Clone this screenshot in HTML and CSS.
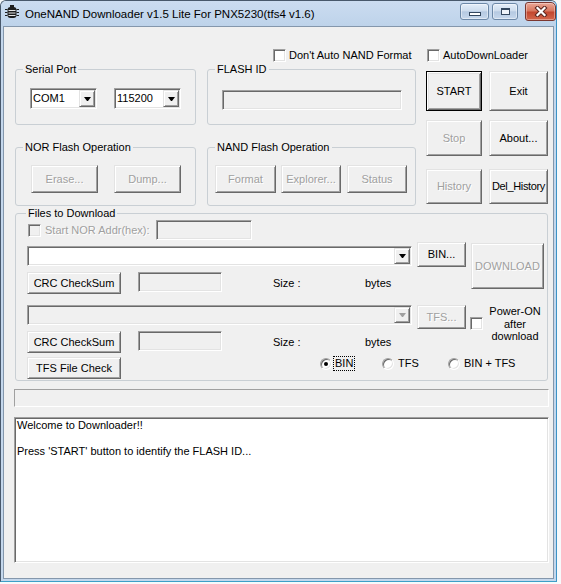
FILE: index.html
```html
<!DOCTYPE html>
<html lang="en">
<head>
<meta charset="utf-8">
<title>OneNAND Downloader</title>
<link rel="stylesheet" href="styles.css">
</head>
<body>
<div class="window">
  <div class="titlebar">
    <svg class="app-icon" width="16" height="16" viewBox="0 0 16 16">
      <rect x="3.5" y="3" width="9" height="11" rx="3" fill="#1e1e1e"/>
      <rect x="6" y="1" width="4" height="3" fill="#1e1e1e"/>
      <path d="M4.5 6.5h7M4.5 9h7M4.5 11.5h7" stroke="#e6e6e6" stroke-width="1"/>
      <path d="M1 5.5h2.5M1 8.5h2.5M1 11.5h2.5M12.5 5.5h2.5M12.5 8.5h2.5M12.5 11.5h2.5" stroke="#1e1e1e" stroke-width="1"/>
    </svg>
    <span class="title">OneNAND Downloader v1.5 Lite For PNX5230(tfs4 v1.6)</span>
    <div class="caps">
      <div class="cap cap-min"><span class="g-min"></span></div>
      <div class="cap cap-max"><span class="g-max"></span></div>
      <div class="cap cap-close">
        <svg width="14" height="11" viewBox="0 0 14 11">
          <path d="M3.5 2 L10.5 9 M10.5 2 L3.5 9" stroke="#5b2620" stroke-width="4.2" stroke-linecap="square"/>
          <path d="M3.5 2 L10.5 9 M10.5 2 L3.5 9" stroke="#ffffff" stroke-width="2.2" stroke-linecap="square"/>
        </svg>
      </div>
    </div>
  </div>
  <div class="client">
    <div class="top">
      <div class="left-col">
        <div class="check chk-nand"><span class="cbox"></span><span>Don't Auto NAND Format</span></div>
        <div class="grow row1">
          <fieldset class="group g-serial">
            <legend>Serial Port</legend>
            <div class="gbody serial-body">
              <div class="combo c-port"><span class="val">COM1</span><span class="drop"><i class="arrow"></i></span></div>
              <div class="combo c-port"><span class="val">115200</span><span class="drop"><i class="arrow"></i></span></div>
            </div>
          </fieldset>
          <fieldset class="group g-flash">
            <legend>FLASH ID</legend>
            <div class="gbody flash-body"><div class="edit ro flash-edit"></div></div>
          </fieldset>
        </div>
        <div class="grow row2">
          <fieldset class="group g-nor">
            <legend>NOR Flash Operation</legend>
            <div class="gbody nor-body">
              <button class="btn dis b-nor">Erase...</button>
              <button class="btn dis b-nor">Dump...</button>
            </div>
          </fieldset>
          <fieldset class="group g-nand">
            <legend>NAND Flash Operation</legend>
            <div class="gbody nand-body">
              <button class="btn dis b-format">Format</button>
              <button class="btn dis b-explorer">Explorer...</button>
              <button class="btn dis b-status">Status</button>
            </div>
          </fieldset>
        </div>
      </div>
      <div class="right-col">
        <div class="check chk-auto"><span class="cbox"></span><span>AutoDownLoader</span></div>
        <div class="brow brow1"><button class="btn default b-l">START</button><button class="btn b-r">Exit</button></div>
        <div class="brow brow2"><button class="btn dis b-l">Stop</button><button class="btn b-r">About...</button></div>
        <div class="brow brow3"><button class="btn dis b-l">History</button><button class="btn b-r tight">Del_History</button></div>
      </div>
    </div>

    <fieldset class="group g-files">
      <legend>Files to Download</legend>
      <div class="files-body">
        <div class="frow fa">
          <span class="cbox dis"></span>
          <span class="lbl-dis nor-lbl">Start NOR Addr(hex):</span>
          <div class="edit ro nor-edit"></div>
        </div>

        <div class="fblock fbc">
          <div class="fleft">
            <div class="frow fb">
              <div class="combo c-file"><span class="val"></span><span class="drop"><i class="arrow"></i></span></div>
              <button class="btn b-bin">BIN...</button>
            </div>
            <div class="frow fc">
              <button class="btn b-crc">CRC CheckSum</button>
              <div class="edit ro crc-edit"></div>
              <span class="size-lbl">Size :</span>
              <span class="bytes-lbl">bytes</span>
            </div>
          </div>
          <button class="btn dis b-download">DOWNLOAD</button>
        </div>

        <div class="fblock fde">
          <div class="fleft">
            <div class="frow fd">
              <div class="combo dis c-file"><span class="val"></span><span class="drop"><i class="arrow"></i></span></div>
              <button class="btn dis b-tfs">TFS...</button>
            </div>
            <div class="frow fe">
              <button class="btn b-crc">CRC CheckSum</button>
              <div class="edit ro crc-edit"></div>
              <span class="size-lbl">Size :</span>
              <span class="bytes-lbl">bytes</span>
            </div>
          </div>
          <div class="power">
            <span class="cbox"></span>
            <span class="power-text">Power-ON<br>after<br>download</span>
          </div>
        </div>

        <div class="frow ff">
          <button class="btn b-crc">TFS File Check</button>
          <div class="radios">
            <div class="ritem r-bin"><span class="radio on"><span class="dot"></span></span><span class="focus">BIN</span></div>
            <div class="ritem r-tfs"><span class="radio"></span><span>TFS</span></div>
            <div class="ritem r-both"><span class="radio"></span><span>BIN + TFS</span></div>
          </div>
        </div>
      </div>
    </fieldset>

    <div class="progress"></div>
    <div class="edit log">Welcome to Downloader!!

Press 'START' button to identify the FLASH ID...</div>
  </div>
</div>
</body>
</html>
```

FILE: styles.css
```css
* { box-sizing: border-box; }
html, body { margin: 0; padding: 0; }
body {
  width: 561px;
  height: 584px;
  overflow: hidden;
  background: #f7f9fb;
  font-family: "Liberation Sans", Arial, sans-serif;
  font-size: 11px;
  line-height: 13px;
  color: #000;
}

/* ---------- window frame ---------- */
.window {
  width: 557px;
  height: 582px;
  display: flex;
  flex-direction: column;
  background: #c4d7ec;
  border: 1px solid;
  border-color: #48586b #3d93c6 #3d9fc8 #48586b;
  border-radius: 6px 6px 0 0;
  padding: 0 2px 2px;
}
.titlebar {
  height: 25px;
  flex: none;
  display: flex;
  align-items: flex-start;
  margin: 0 -2px;
  padding-left: 3px;
  border-radius: 5px 5px 0 0;
  background: linear-gradient(#cbdcf0, #bed3ea);
}
.app-icon { margin-top: 3px; flex: none; }
.title {
  margin: 6px 0 0 5px;
  font-size: 11.5px;
  line-height: 14px;
  white-space: nowrap;
  color: #000;
}
.caps { margin-left: auto; display: flex; align-items: flex-start; }
.cap { display: flex; align-items: center; justify-content: center; }
.cap-min, .cap-max {
  height: 17px;
  margin-top: 2px;
  border: 1px solid #6c88a7;
  border-radius: 3px;
  background: linear-gradient(#e4eef9, #cddced 46%, #b5c9e1 52%, #c7d8ec);
  box-shadow: inset 0 0 0 1px rgba(255,255,255,0.45);
}
.cap-min { width: 29px; }
.cap-max { width: 26px; margin-left: 3px; }
.g-min {
  width: 12px; height: 4px; margin-top: 5px;
  background: #fff; border: 1px solid #33475e;
}
.g-max {
  width: 9px; height: 7px;
  background: #eef3f9; border: 1px solid #33475e; border-top-width: 2px;
}
.cap-close {
  width: 31px; height: 19px;
  margin: 1px 0 0 7px;
  border: 1px solid #7b3730;
  border-radius: 3px 5px 3px 3px;
  background: linear-gradient(#eaa797, #d8775f 46%, #c2472f 54%, #d4674c);
  box-shadow: inset 0 0 0 1px rgba(255,255,255,0.35);
}

/* ---------- client ---------- */
.client {
  flex: 1;
  display: flex;
  flex-direction: column;
  align-items: flex-start;
  background: #f0f0f0;
  border: 1px solid #8497ac;
  padding-left: 10px;
}
.top { display: flex; margin-left: 1px; }
.left-col { width: 401px; }
.right-col { width: 122px; margin-left: 10px; }

/* checkbox */
.check { display: flex; align-items: center; height: 13px; gap: 3px; white-space: nowrap; }
.chk-nand { margin: 22px 0 0 258px; }
.chk-auto { margin: 22px 0 0 1px; }
.cbox {
  flex: none;
  width: 13px; height: 13px;
  background: #fff;
  border: 1px solid;
  border-color: #a0a0a0 #fff #fff #a0a0a0;
  box-shadow: inset 1px 1px #696969, inset -1px -1px #e3e3e3;
}
.cbox.dis { background: #f0f0f0; }

/* group boxes */
.group {
  margin: 0;
  padding: 0;
  min-width: 0;
  border: 1px solid #c9cfd4;
  border-radius: 3px;
}
.group legend {
  margin-left: 7px;
  padding: 0 2px;
  height: 13px;
  line-height: 13px;
  white-space: nowrap;
}
.grow { display: flex; gap: 11px; }
.row1 { margin-top: 1px; }
.row2 { margin-top: 16px; }
.g-serial, .g-nor { width: 181px; }
.g-flash, .g-nand { width: 209px; }
.g-serial, .g-flash { height: 62px; }
.g-nor, .g-nand { height: 65px; }
.gbody { display: flex; }
.serial-body { padding: 12px 0 0 14px; gap: 17px; }
.flash-body { padding: 14px 0 0 14px; }
.nor-body { padding: 11px 0 0 15px; gap: 16px; }
.nand-body { padding: 11px 0 0 7px; }

/* buttons */
.btn {
  margin: 0;
  padding: 0;
  font: inherit;
  line-height: 13px;
  color: #000;
  background: #f0f0f0;
  border: 1px solid;
  border-color: #e3e3e3 #696969 #696969 #e3e3e3;
  box-shadow: inset 1px 1px #fff, inset -1px -1px #a0a0a0;
  white-space: nowrap;
  text-align: center;
}
.btn.default {
  border-color: #000;
  box-shadow: inset 1px 1px #fff, inset -1px -1px #696969, inset 2px 2px #e3e3e3, inset -2px -2px #a0a0a0;
}
.btn.tight { letter-spacing: -0.35px; }
.btn.dis, .lbl-dis { color: #a0a0a0; text-shadow: 1px 1px 0 #fff; }
.b-nor { width: 67px; height: 28px; }
.b-format { width: 61px; height: 28px; }
.b-explorer { width: 60px; height: 28px; margin-left: 5px; }
.b-status { width: 60px; height: 28px; margin-left: 6px; }

.brow { display: flex; gap: 7px; }
.brow .btn { height: 100%; }
.b-l { width: 56px; }
.b-r { width: 59px; }
.brow1 { margin-top: 9px; height: 40px; }
.brow2 { margin-top: 9px; height: 36px; }
.brow3 { margin-top: 13px; height: 35px; }

/* edits and combos */
.edit {
  background: #fff;
  border: 1px solid;
  border-color: #a0a0a0 #fff #fff #a0a0a0;
  box-shadow: inset 1px 1px #696969, inset -1px -1px #e3e3e3;
}
.edit.ro { background: #f0f0f0; }
.flash-edit { width: 180px; height: 20px; }

.combo {
  display: flex;
  align-items: center;
  background: #fff;
  border: 1px solid;
  border-color: #a0a0a0 #fff #fff #a0a0a0;
  box-shadow: inset 1px 1px #696969, inset -1px -1px #e3e3e3;
}
.combo.dis { background: #f0f0f0; }
.combo .val { flex: 1; padding-left: 2px; white-space: nowrap; }
.combo .drop {
  flex: none;
  width: 16px;
  align-self: stretch;
  margin: 1px;
  display: flex;
  align-items: center;
  justify-content: center;
  background: #f0f0f0;
  border: 1px solid;
  border-color: #e3e3e3 #696969 #696969 #e3e3e3;
  box-shadow: inset 1px 1px #fff, inset -1px -1px #a0a0a0;
}
.arrow {
  width: 1px; height: 0;
  border-style: solid;
  border-color: #000 transparent transparent;
  border-width: 4px 3px 0;
  box-sizing: content-box;
}
.combo.dis .arrow { border-top-color: #a0a0a0; }
.c-port { width: 67px; height: 21px; }

/* files group */
.g-files { margin: 1px 0 0 1px; width: 533px; height: 174px; }
.g-files legend { margin-left: 10px; }
.files-body { padding-left: 11px; }
.frow { display: flex; align-items: flex-start; }
.fa { align-items: center; height: 20px; }
.fa .cbox { margin-left: 1px; }
.nor-lbl { margin-left: 4px; width: 111px; white-space: nowrap; }
.nor-edit { width: 96px; height: 20px; }
.fblock { display: flex; align-items: flex-start; }
.fbc { margin-top: 2px; }
.fde { margin-top: 11px; }
.fleft { width: 439px; flex: none; }
.c-file { width: 385px; height: 20px; flex: none; }
.fb .c-file { margin-top: 4px; }
.b-bin, .b-tfs { width: 49px; margin-left: 5px; }
.b-bin { height: 25px; }
.b-tfs { height: 24px; }
.fc { margin-top: 5px; }
.fe { margin-top: 2px; }
.b-crc { width: 94px; height: 22px; }
.crc-edit { width: 84px; height: 20px; margin-left: 17px; }
.size-lbl { margin-left: 51px; width: 92px; line-height: 22px; }
.bytes-lbl { line-height: 22px; }
.b-download { width: 73px; height: 46px; margin: 1px 0 0 5px; }
.power { display: flex; align-items: flex-start; margin-left: 4px; }
.power .cbox { margin-top: 12px; }
.power-text { width: 64px; text-align: center; line-height: 12.6px; }
.ff { margin-top: 4px; }

/* radios */
.radios { display: flex; margin-left: 199px; }
.ritem { display: flex; align-items: center; height: 13px; gap: 4px; white-space: nowrap; }
.r-bin { width: 62px; }
.r-tfs { width: 66px; }
.radio {
  flex: none;
  width: 12px; height: 12px;
  border-radius: 50%;
  background: #fff;
  border: 1px solid;
  border-color: #a0a0a0 #fff #fff #a0a0a0;
  box-shadow: inset 1px 1px #696969, inset -1px -1px #e3e3e3;
  display: flex; align-items: center; justify-content: center;
}
.dot { width: 4px; height: 4px; border-radius: 50%; background: #000; }
.focus {
  margin-left: -3px;
  padding: 0 1px;
  border: 1px dotted #000;
  line-height: 13px;
}

/* progress + log */
.progress {
  margin-top: 8px;
  width: 535px;
  height: 18px;
  background: #f0f0f0;
  border: 1px solid;
  border-color: #a0a0a0 #fff #fff #a0a0a0;
}
.log {
  margin-top: 10px;
  width: 535px;
  height: 146px;
  padding: 1px 2px;
  white-space: pre-line;
  line-height: 13px;
}
```
